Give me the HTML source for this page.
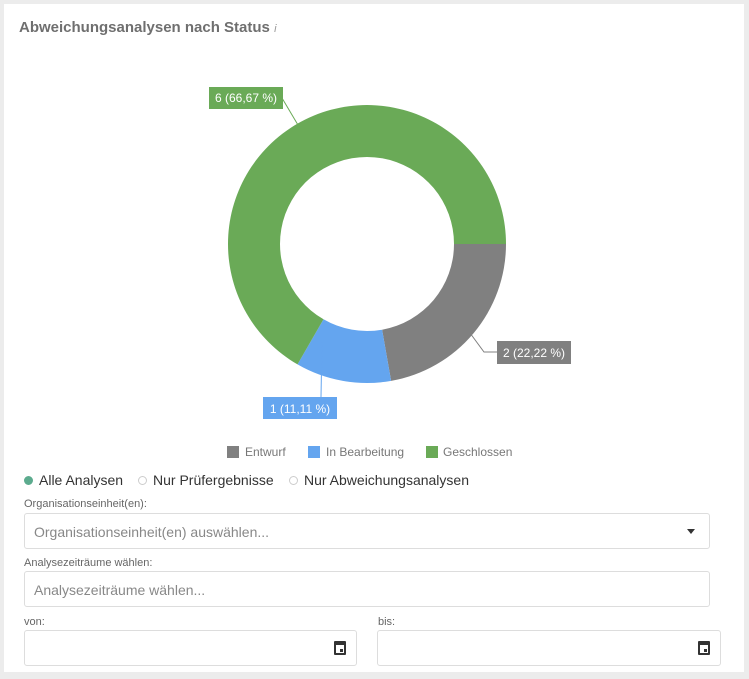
<!DOCTYPE html>
<html><head><meta charset="utf-8"><style>
body{margin:0;width:749px;height:679px;background:#ececec;font-family:"Liberation Sans",sans-serif;position:relative;overflow:hidden}
.card{position:absolute;left:4px;top:4px;width:740px;height:668px;background:#fff}
.t{position:absolute;left:19px;top:19px;font-size:15px;font-weight:bold;color:#6f6f6f}
.lbl{position:absolute;font-size:11px;color:#666}
.inp{position:absolute;border:1px solid #ddd;border-radius:3px;background:#fff;box-sizing:border-box}
.ph{position:absolute;left:9px;top:10px;font-size:14px;color:#888}
.leg{position:absolute;top:445px;font-size:12px;color:#777}
.sq{position:absolute;top:446px;width:12px;height:12px}
.rad{position:absolute;top:476px;font-size:14px;color:#333}
.rc{position:absolute;top:476px;width:9px;height:9px;border:1px solid #ccc;border-radius:50%;box-sizing:border-box}
</style></head><body>
<div class="card"></div>
<div class="t">Abweichungsanalysen nach Status <i style="font-weight:normal;font-size:11px;color:#999">i</i></div>
<svg style="position:absolute;left:0;top:0" width="749" height="440">
<path d="M506,244 A139,139 0 0 1 391.1,380.9 L382.1,329.7 A87,87 0 0 0 454,244 Z" fill="#808080"/>
<path d="M391.1,380.9 A139,139 0 0 1 297.5,364.4 L323.5,319.3 A87,87 0 0 0 382.1,329.7 Z" fill="#64a5ef"/>
<path d="M297.5,364.4 A139,139 0 1 1 506,244 L454,244 A87,87 0 1 0 323.5,319.3 Z" fill="#6aaa57"/>
<polyline points="282,98 298,125" stroke="#6aaa57" fill="none"/>
<polyline points="470,333 484,352 497,352" stroke="#808080" fill="none"/>
<polyline points="322,341 321,397" stroke="#64a5ef" fill="none"/>
<rect x="209" y="87" width="74" height="22" fill="#6aaa57"/>
<text x="246" y="102" font-size="12" fill="#fff" text-anchor="middle" font-family="Liberation Sans">6 (66,67 %)</text>
<rect x="497" y="341" width="74" height="23" fill="#808080"/>
<text x="534" y="357" font-size="12" fill="#fff" text-anchor="middle" font-family="Liberation Sans">2 (22,22 %)</text>
<rect x="263" y="397" width="74" height="22" fill="#64a5ef"/>
<text x="300" y="413" font-size="12" fill="#fff" text-anchor="middle" font-family="Liberation Sans">1 (11,11 %)</text>
</svg>
<div class="sq" style="left:227px;background:#808080"></div><div class="leg" style="left:245px">Entwurf</div>
<div class="sq" style="left:308px;background:#64a5ef"></div><div class="leg" style="left:326px">In Bearbeitung</div>
<div class="sq" style="left:426px;background:#6aaa57"></div><div class="leg" style="left:443px">Geschlossen</div>
<div class="rc" style="left:24px;background:#5cab8e;border-color:#5cab8e"></div><div class="rad" style="left:39px;top:472px">Alle Analysen</div>
<div class="rc" style="left:138px"></div><div class="rad" style="left:153px;top:472px">Nur Prüfergebnisse</div>
<div class="rc" style="left:289px"></div><div class="rad" style="left:304px;top:472px">Nur Abweichungsanalysen</div>
<div class="lbl" style="left:24px;top:498px">Organisationseinheit(en):</div>
<div class="inp" style="left:24px;top:513px;width:686px;height:36px"><div class="ph">Organisationseinheit(en) auswählen...</div><div style="position:absolute;right:14px;top:15px;border:4px solid transparent;border-top:5px solid #333"></div></div>
<div class="lbl" style="left:24px;top:557px">Analysezeiträume wählen:</div>
<div class="inp" style="left:24px;top:571px;width:686px;height:36px"><div class="ph">Analysezeiträume wählen...</div></div>
<div class="lbl" style="left:24px;top:616px">von:</div>
<div class="lbl" style="left:378px;top:616px">bis:</div>
<div class="inp" style="left:24px;top:630px;width:333px;height:36px"><div style="position:absolute;right:10px;top:10px;width:12px;height:14px;background:#333;border-radius:1px"><div style="position:absolute;left:2px;top:4px;width:8px;height:8px;background:#fff"></div><div style="position:absolute;left:6px;top:8px;width:3px;height:3px;background:#333"></div></div></div>
<div class="inp" style="left:377px;top:630px;width:344px;height:36px"><div style="position:absolute;right:10px;top:10px;width:12px;height:14px;background:#333;border-radius:1px"><div style="position:absolute;left:2px;top:4px;width:8px;height:8px;background:#fff"></div><div style="position:absolute;left:6px;top:8px;width:3px;height:3px;background:#333"></div></div></div>
</body></html>
